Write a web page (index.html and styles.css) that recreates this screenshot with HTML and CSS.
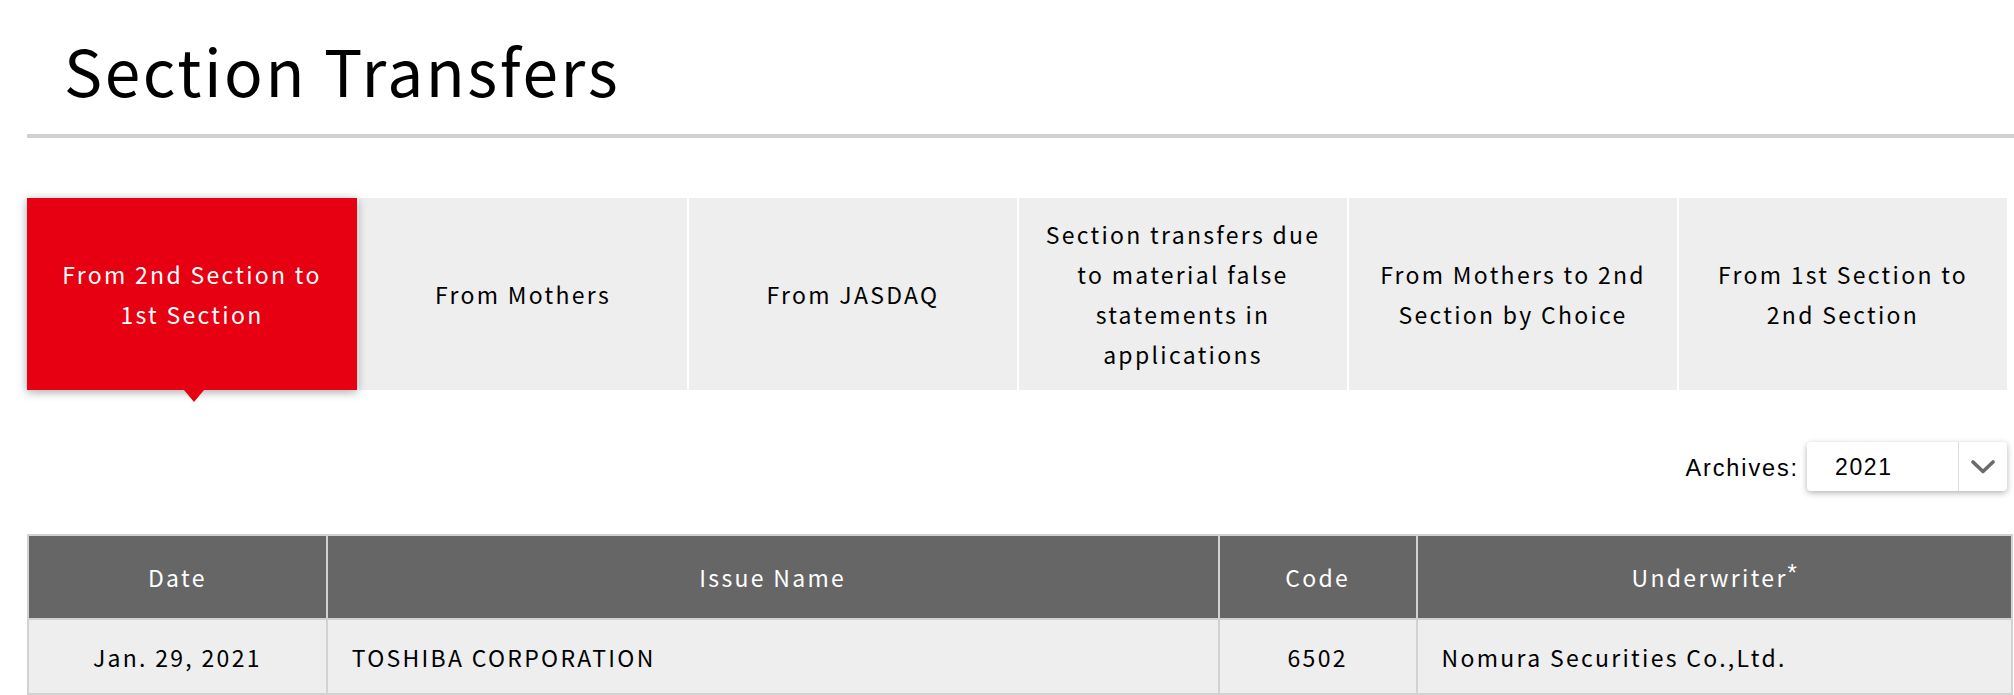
FILE: index.html
```html
<!DOCTYPE html>
<html lang="en">
<head>
<meta charset="utf-8">
<title>Section Transfers</title>
<link rel="stylesheet" href="styles.css">
</head>
<body>
<div class="page">
  <h1 class="title">Section Transfers</h1>

  <ul class="tabs">
    <li class="tab active"><span>From 2nd Section to<br>1st Section</span></li>
    <li class="tab"><span>From Mothers</span></li>
    <li class="tab"><span>From JASDAQ</span></li>
    <li class="tab"><span>Section transfers due<br>to material false<br>statements in<br>applications</span></li>
    <li class="tab"><span>From Mothers to 2nd<br>Section by Choice</span></li>
    <li class="tab"><span>From 1st Section to<br>2nd Section</span></li>
  </ul>

  <div class="archives">
    <span class="archives-label">Archives:</span>
    <div class="select">
      <span class="select-value">2021</span>
      <span class="select-arrow">
        <svg width="24" height="14" viewBox="0 0 24 14"><polyline points="2,2 12,11.5 22,2" fill="none" stroke="#6b6b6b" stroke-width="3.6" stroke-linecap="round" stroke-linejoin="round"/></svg>
      </span>
    </div>
  </div>

  <table class="list">
    <colgroup>
      <col class="c-date">
      <col class="c-name">
      <col class="c-code">
      <col class="c-uw">
    </colgroup>
    <thead>
      <tr>
        <th>Date</th>
        <th>Issue Name</th>
        <th>Code</th>
        <th>Underwriter<sup class="note">*</sup></th>
      </tr>
    </thead>
    <tbody>
      <tr>
        <td>Jan. 29, 2021</td>
        <td class="left">TOSHIBA CORPORATION</td>
        <td>6502</td>
        <td class="left">Nomura Securities Co.,Ltd.</td>
      </tr>
    </tbody>
  </table>
</div>
</body>
</html>
```

FILE: styles.css
```css
* {
  box-sizing: border-box;
}

html,
body {
  margin: 0;
  padding: 0;
  background: #ffffff;
}

body {
  font-family: "Noto Sans CJK JP", "Liberation Sans", sans-serif;
  color: #000000;
  overflow: hidden;
}

.page {
  padding-left: 27px;
}

.title {
  margin: 0;
  height: 138px;
  padding: 37px 0 0 37px;
  font-size: 64px;
  font-weight: 400;
  line-height: 1;
  letter-spacing: 0.04em;
  border-bottom: 4px solid #d0d0d0;
}

.tabs {
  list-style: none;
  margin: 60px 7px 0 0;
  padding: 0;
  display: grid;
  grid-template-columns: 330px repeat(5, 1fr);
  gap: 2px;
  height: 192px;
}

.tab {
  background: #eeeeee;
  display: flex;
  align-items: center;
  justify-content: center;
  text-align: center;
  font-size: 23px;
  line-height: 40px;
  letter-spacing: 0.1em;
}

.tab.active {
  position: relative;
  z-index: 1;
  background: #e60012;
  color: #ffffff;
  box-shadow: 0 2px 9px rgba(0, 0, 0, 0.35);
}

.tab.active::after {
  content: "";
  position: absolute;
  left: 50%;
  top: 100%;
  margin-left: -8px;
  border-left: 10px solid transparent;
  border-right: 10px solid transparent;
  border-top: 12px solid #e60012;
}

.archives {
  margin: 52px 7px 0 0;
  display: flex;
  justify-content: flex-end;
  align-items: center;
  gap: 8px;
}

.archives-label {
  padding-top: 4px;
  font-family: "Liberation Sans", Arial, sans-serif;
  font-size: 23.5px;
  letter-spacing: 0.08em;
}

.select {
  width: 200px;
  height: 49px;
  display: flex;
  background: #ffffff;
  border-radius: 4px;
  box-shadow: 0 2px 6px rgba(0, 0, 0, 0.3);
}

.select-value {
  flex: 1;
  padding: 2px 0 0 28px;
  font-family: "Liberation Sans", Arial, sans-serif;
  font-size: 23px;
  letter-spacing: 0.07em;
  line-height: 47px;
}

.select-arrow {
  width: 49px;
  border-left: 1px solid #dddddd;
  display: flex;
  align-items: center;
  justify-content: center;
}

.list {
  margin-top: 43px;
  width: 1986px;
  border-collapse: collapse;
  border: 2px solid #d2d2d2;
  font-size: 23px;
  letter-spacing: 0.1em;
}

.c-date { width: 299px; }
.c-name { width: 893px; }
.c-code { width: 198px; }
.c-uw { width: 596px; }

.list th,
.list td {
  border: 2px solid #d2d2d2;
  text-align: center;
  font-weight: 400;
  padding: 0;
}

.list th {
  height: 84px;
  background: #666666;
  color: #ffffff;
}

.list td {
  height: 75px;
  background: #eeeeee;
}

.list td.left {
  text-align: left;
  padding-left: 24px;
}

.note {
  font-family: "Liberation Sans", Arial, sans-serif;
  font-size: 24px;
  vertical-align: 6px;
  line-height: 0;
  letter-spacing: 0;
}
```
